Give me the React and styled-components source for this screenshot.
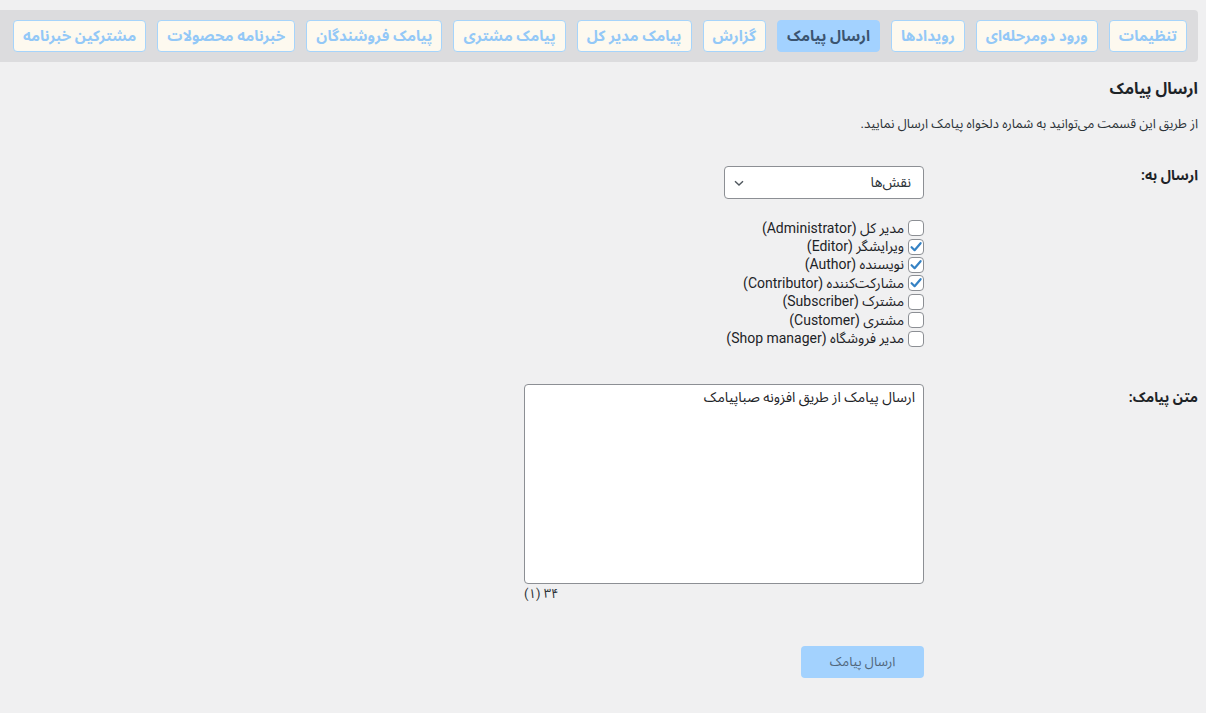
import React from 'react'
import styled, { createGlobalStyle } from 'styled-components'

const GlobalStyle = createGlobalStyle`
  html, body {
    margin: 0;
    padding: 0;
    background: #f0f0f1;
  }
  body {
    font-family: Roboto, "Noto Sans Arabic", "Vazirmatn", "DejaVu Sans", sans-serif;
    color: #1d2327;
    font-size: 13px;
  }
`

const tabs = [
  'تنظیمات',
  'ورود دومرحله‌ای',
  'رویدادها',
  'ارسال پیامک',
  'گزارش',
  'پیامک مدیر کل',
  'پیامک مشتری',
  'پیامک فروشندگان',
  'خبرنامه محصولات',
  'مشترکین خبرنامه',
]

const roles = [
  { name: 'مدیر کل (Administrator)', checked: false },
  { name: 'ویرایشگر (Editor)', checked: true },
  { name: 'نویسنده (Author)', checked: true },
  { name: 'مشارکت‌کننده (Contributor)', checked: true },
  { name: 'مشترک (Subscriber)', checked: false },
  { name: 'مشتری (Customer)', checked: false },
  { name: 'مدیر فروشگاه (Shop manager)', checked: false },
]

const Wrap = styled.div`
  direction: rtl;
  padding: 10px 8px 0 0;
`

const TabBar = styled.nav`
  display: flex;
  flex-wrap: nowrap;
  gap: 11px;
  padding: 10px 11px 10px 0;
  background: #dcdcde;
  border-radius: 0 4px 4px 0;
  overflow: hidden;
`

const Tab = styled.a`
  flex: 0 0 auto;
  display: flex;
  align-items: center;
  height: 32px;
  box-sizing: border-box;
  padding: 0 9px;
  border: 1px solid ${p => (p.$active ? '#a3d2ff' : '#a6d4fb')};
  border-radius: 4px;
  background: ${p => (p.$active ? '#a3d2ff' : '#fdf9ef')};
  color: ${p => (p.$active ? '#3b5470' : '#93c8f7')};
  font-size: 15px;
  font-weight: 700;
  white-space: nowrap;
  cursor: pointer;
`

const Title = styled.h2`
  margin: 16px 0 0;
  font-size: 16px;
  line-height: 22px;
  font-weight: 700;
  color: #1d2327;
`

const Desc = styled.p`
  margin: 14px 0 0;
  font-size: 13px;
  line-height: 20px;
  color: #2c3338;
`

const FormRow = styled.div`
  display: grid;
  grid-template-columns: 274px 400px;
  align-items: start;
  margin-top: ${p => p.$top}px;
`

const Label = styled.label`
  font-size: 14px;
  font-weight: 700;
  line-height: 18px;
  margin-top: ${p => p.$offset || 0}px;
  color: #1d2327;
`

const Field = styled.div`
  display: flex;
  flex-direction: column;
  align-items: flex-start;
`

const Select = styled.div`
  width: 200px;
  height: 33px;
  box-sizing: border-box;
  display: flex;
  align-items: center;
  justify-content: space-between;
  padding: 0 12px 0 8px;
  background: #fff;
  border: 1px solid #8c8f94;
  border-radius: 4px;
  font-size: 14px;
  color: #2c3338;
`

const RoleList = styled.div`
  margin-top: 20px;
  display: flex;
  flex-direction: column;
`

const RoleRow = styled.label`
  display: flex;
  align-items: center;
  gap: 4px;
  height: 18.4px;
  font-size: 14px;
  color: #1d2327;
  white-space: nowrap;
`

const Box = styled.span`
  width: 16px;
  height: 16px;
  box-sizing: border-box;
  border: 1px solid #8c8f94;
  border-radius: 4px;
  background: #fff;
  display: flex;
  align-items: center;
  justify-content: center;
  flex: 0 0 auto;
`

const TextArea = styled.textarea`
  width: 400px;
  height: 200px;
  box-sizing: border-box;
  margin: 0;
  padding: 2px 8px;
  background: #fff;
  border: 1px solid #8c8f94;
  border-radius: 4px;
  font-family: inherit;
  font-size: 14px;
  line-height: 20px;
  color: #1d2327;
  resize: none;
  direction: rtl;
`

const Counter = styled.div`
  align-self: flex-end;
  margin-top: 1px;
  font-size: 13px;
  line-height: 17px;
  color: #2c3338;
`

const Submit = styled.button`
  margin: 44px 0 0;
  width: 123px;
  height: 32px;
  border: 0;
  border-radius: 4px;
  background: #a3d2fe;
  color: #50667b;
  font-family: inherit;
  font-size: 13px;
  cursor: default;
`

const Check = () => (
  <svg width="14" height="14" viewBox="0 0 14 14">
    <path d="M2.6 7.2 L5.6 10.2 L11.6 3.2" fill="none" stroke="#3582c4" strokeWidth="2.2" strokeLinecap="round" strokeLinejoin="round" />
  </svg>
)

const Chevron = () => (
  <svg width="12" height="12" viewBox="0 0 12 12">
    <path d="M2 4.2 L6 8 L10 4.2" fill="none" stroke="#50575e" strokeWidth="1.4" />
  </svg>
)

const App = () => {
  return (
    <Wrap>
      <GlobalStyle />
      <TabBar>
        {tabs.map(t => (
          <Tab key={t} $active={t === 'ارسال پیامک'}>{t}</Tab>
        ))}
      </TabBar>
      <Title>ارسال پیامک</Title>
      <Desc>از طریق این قسمت می‌توانید به شماره دلخواه پیامک ارسال نمایید.</Desc>

      <FormRow $top={32}>
        <Label $offset={0}>ارسال به:</Label>
        <Field>
          <Select>
            <span>نقش‌ها</span>
            <Chevron />
          </Select>
          <RoleList>
            {roles.map(r => (
              <RoleRow key={r.name}>
                <Box>{r.checked && <Check />}</Box>
                {r.name}
              </RoleRow>
            ))}
          </RoleList>
        </Field>
      </FormRow>

      <FormRow $top={36}>
        <Label $offset={4}>متن پیامک:</Label>
        <Field>
          <TextArea defaultValue="ارسال پیامک از طریق افزونه صباپیامک" />
          <Counter>۳۴ (۱)</Counter>
          <Submit>ارسال پیامک</Submit>
        </Field>
      </FormRow>
    </Wrap>
  )
}

export default App
